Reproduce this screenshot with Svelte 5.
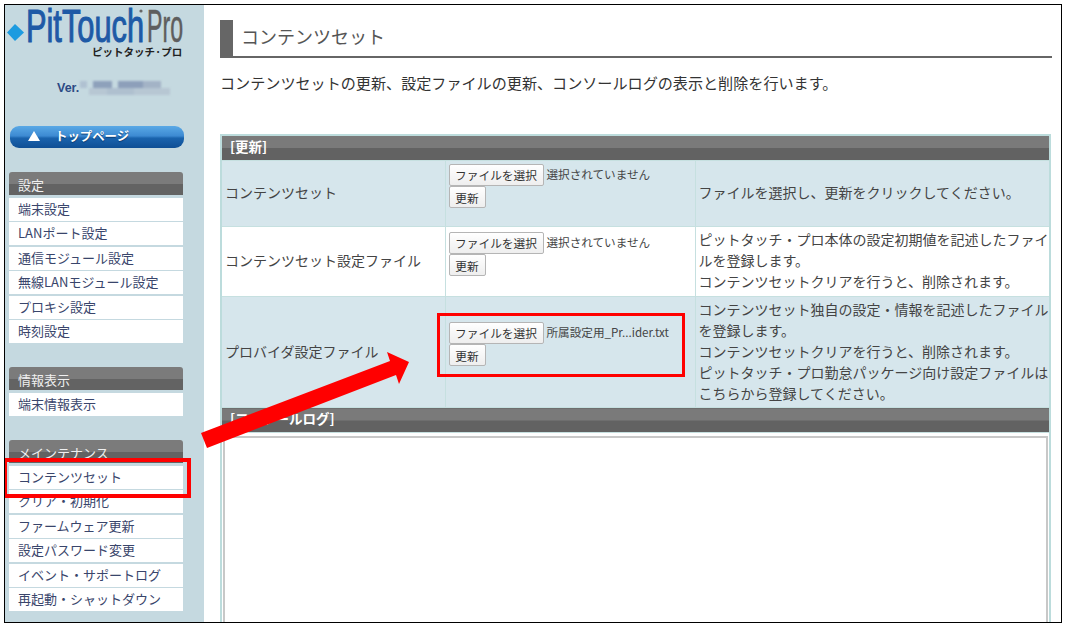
<script>
  const menus = [
    { title: '設定', items: ['端末設定', 'LANポート設定', '通信モジュール設定', '無線LANモジュール設定', 'プロキシ設定', '時刻設定'] },
    { title: '情報表示', items: ['端末情報表示'] },
    { title: 'メインテナンス', items: ['コンテンツセット', 'クリア・初期化', 'ファームウェア更新', '設定パスワード変更', 'イベント・サポートログ', '再起動・シャットダウン'] }
  ];
  const rows = [
    { name: 'コンテンツセット', file: '選択されていません', h: 'r1', lines: ['ファイルを選択し、更新をクリックしてください。'] },
    { name: 'コンテンツセット設定ファイル', file: '選択されていません', h: 'r2', lines: ['ピットタッチ・プロ本体の設定初期値を記述したファイルを登録します。', 'コンテンツセットクリアを行うと、削除されます。'] },
    { name: 'プロバイダ設定ファイル', file: '所属設定用_Pr...ider.txt', h: 'r3', lines: ['コンテンツセット独自の設定・情報を記述したファイルを登録します。', 'コンテンツセットクリアを行うと、削除されます。', 'ピットタッチ・プロ勤怠パッケージ向け設定ファイルはこちらから登録してください。'] }
  ];
</script>

<div class="frame">
  <aside class="side">
    <div class="logo">
      <svg width="184" height="54" viewBox="0 0 184 54">
        <polygon points="10,19 19,27.5 10,36 2,27.5" fill="#1d9be0" />
        <text x="21" y="37" class="lg-blue" textLength="118" lengthAdjust="spacingAndGlyphs">PitTouch</text>
        <text x="142" y="37" class="lg-grey" textLength="36" lengthAdjust="spacingAndGlyphs">Pro</text>
        <circle cx="136" cy="6" r="1.6" fill="#666" />
      </svg>
      <div class="kana">ピットタッチ·プロ</div>
    </div>
    <div class="ver"><b>Ver.</b><span class="blur" aria-hidden="true"></span></div>
    <button class="top"><span class="tri"></span><span>トップページ</span></button>
    {#each menus as m}
      <section class="menu">
        <h3>{m.title}</h3>
        <ul>
          {#each m.items as it}<li>{it}</li>{/each}
        </ul>
      </section>
    {/each}
  </aside>

  <main class="main">
    <h1>コンテンツセット</h1>
    <p class="desc">コンテンツセットの更新、設定ファイルの更新、コンソールログの表示と削除を行います。</p>
    <table>
      <colgroup><col class="c1" /><col class="c2" /><col class="c3" /></colgroup>
      <tbody>
        <tr><th colspan="3">[更新]</th></tr>
        {#each rows as r}
          <tr class={r.h}>
            <td>{r.name}</td>
            <td class="ctl">
              <div class="line"><button class="btn file">ファイルを選択</button><span class="fname">{r.file}</span></div>
              <button class="btn upd">更新</button>
            </td>
            <td class="txt">{#each r.lines as l}<div>{l}</div>{/each}</td>
          </tr>
        {/each}
        <tr><th colspan="3">[コンソールログ]</th></tr>
        <tr class="log"><td colspan="3"><textarea readonly></textarea></td></tr>
      </tbody>
    </table>
  </main>

  <div class="mark m1"></div>
  <div class="mark m2"></div>
  <svg class="arrow" width="1066" height="627" viewBox="0 0 1066 627">
    <polygon points="201,433 390,361 387,352 409,362 399,384 396,375 207,448" fill="#ff0000" />
  </svg>
</div>

<style>
  :global(body) { margin: 0; background: #fff; }
  .frame {
    position: relative;
    box-sizing: border-box;
    width: 1058px;
    height: 619px;
    margin: 4px 0 0 4px;
    border: 1px solid #000;
    display: flex;
    overflow: hidden;
    font-family: "Noto Sans CJK JP", "Noto Sans", sans-serif;
    background: #fff;
  }
  .side {
    flex: 0 0 199px;
    min-width: 0;
    background: #c5d9e0;
    padding: 0 20px 0 4px;
    box-sizing: border-box;
  }
  .logo { height: 54px; position: relative; }
  .logo svg { display: block; margin: 0 0 0 -4px; }
  .lg-blue { font: 400 46px "Liberation Sans", sans-serif; fill: #1e5aa6; stroke: #1e5aa6; stroke-width: 1.1px; }
  .lg-grey { font: 400 46px "Liberation Sans", sans-serif; fill: #5e5e5e; stroke: #5e5e5e; stroke-width: .6px; }
  .kana {
    position: absolute; left: 83px; top: 40px;
    font-size: 10.5px; line-height: 14px; font-weight: 700; color: #222; white-space: nowrap;
  }
  .ver { display: flex; align-items: center; height: 16px; margin: 21px 0 0 48px; font-family: "Liberation Sans", sans-serif; }
  .ver b { font-size: 12.5px; color: #2c4a84; }
  .blur {
    flex: none; width: 90px; height: 14px; margin-left: 1px; filter: blur(1.2px);
    background:
      linear-gradient(90deg, #b0c1d1 0 8%, transparent 8% 14%, #8ea1bb 14% 36%, transparent 36% 42%, #8d9fba 42% 70%, #a3b3c6 70% 90%, transparent 90%) top / 100% 50% no-repeat,
      linear-gradient(90deg, transparent 0 10%, #b7c7d3 10% 30%, #afc0cf 30% 60%, #b7c7d3 60% 100%) bottom / 100% 50% no-repeat;
  }
  .top {
    display: flex; align-items: center; gap: 15px;
    box-sizing: border-box;
    width: 174px; height: 22px; margin: 30px 0 24px 1px;
    padding: 0 0 2px 18px;
    border: 0; border-radius: 9px;
    background: linear-gradient(#5aa9e6 0, #3d8ad2 45%, #1a63ad 55%, #0f4f95 100%);
    color: #fff; font: 700 12.4px "Noto Sans CJK JP", sans-serif;
    text-shadow: 0 1px 1px #0a3a70;
  }
  .tri { width: 0; height: 0; border: 6.5px solid transparent; border-top: 0; border-bottom: 10px solid #fff; }
  .menu { width: 174px; margin-bottom: 24px; }
  .menu h3 {
    margin: 0; height: 23px; box-sizing: border-box;
    padding: 0 9px; border-radius: 3px 3px 0 0;
    background: linear-gradient(#7b7b7b 0 54%, #636363 54% 100%);
    color: #f0f0f0; font-size: 13px; font-weight: 400; line-height: 26px; overflow: hidden;
  }
  .menu ul { list-style: none; margin: 3px 0 0; padding: 0; display: flex; flex-direction: column; gap: 1.4px; }
  .menu li {
    height: 23px; background: #fff; padding-left: 9px;
    font-size: 13px; line-height: 22px; color: #39456b; white-space: nowrap;
  }

  .main { flex: 1; min-width: 0; padding: 15px 9px 0 16px; box-sizing: border-box; }
  h1 {
    margin: 0; height: 38px; box-sizing: border-box;
    border-left: 13px solid #666; border-bottom: 2px solid #666;
    padding-left: 8px; font-size: 18px; font-weight: 400; line-height: 32px; color: #555;
  }
  .desc { margin: 12px 0 0; font-size: 15.1px; line-height: 24px; color: #333; white-space: nowrap; }
  table {
    width: 831px; table-layout: fixed; border-collapse: collapse;
    margin-top: 40px; border: 2px solid #bcdcdc; color: #444;
  }
  .c1 { width: 224px; } .c2 { width: 250px; }
  th {
    height: 24px; padding: 0 0 4px 8px; box-sizing: border-box; text-align: left;
    background: linear-gradient(#7a7a7a 0 50%, #626262 50% 100%);
    color: #fff; font-size: 13.5px; font-weight: 700; line-height: 20px;
  }
  td { border: 1px solid #c6e0e0; padding: 0 0 2px 3px; font-size: 14px; line-height: 21px; vertical-align: middle; }
  .r1 td, .r3 td { background: #d6e6ec; }
  .r1 { height: 66px; } .r2 { height: 70px; } .r3 { height: 111px; }
  td.ctl { vertical-align: top; padding-top: 2px; }
  .r3 td.ctl { padding-top: 24px; }
  .r2 td.ctl { padding-top: 4px; }
  .line { display: flex; align-items: center; gap: 3px; height: 23px; }
  .btn {
    display: block; box-sizing: border-box; height: 22px; padding: 0;
    font: 400 11.7px "Noto Sans CJK JP", sans-serif; color: #333; white-space: nowrap;
    background: linear-gradient(#fff, #eee); border: 1px solid #b5b5b5; border-radius: 2px;
  }
  .file { width: 95px; } .upd { width: 37px; }
  .fname { font-size: 11.6px; color: #444; white-space: nowrap; }
  .log td { padding: 3px 1px 0; background: #fff; }
  textarea {
    display: block; box-sizing: border-box; width: 825px; height: 300px;
    border: 2px solid #c8c8c8; background: #fff; resize: none; margin: 0;
  }

  .mark { position: absolute; box-sizing: border-box; border: 4px solid #f00; }
  .m1 { left: -2px; top: 453px; width: 188px; height: 40px; }
  .m2 { left: 432px; top: 308px; width: 248px; height: 64px; border-width: 3px; }
  .arrow { position: absolute; left: -5px; top: -5px; pointer-events: none; }
</style>
